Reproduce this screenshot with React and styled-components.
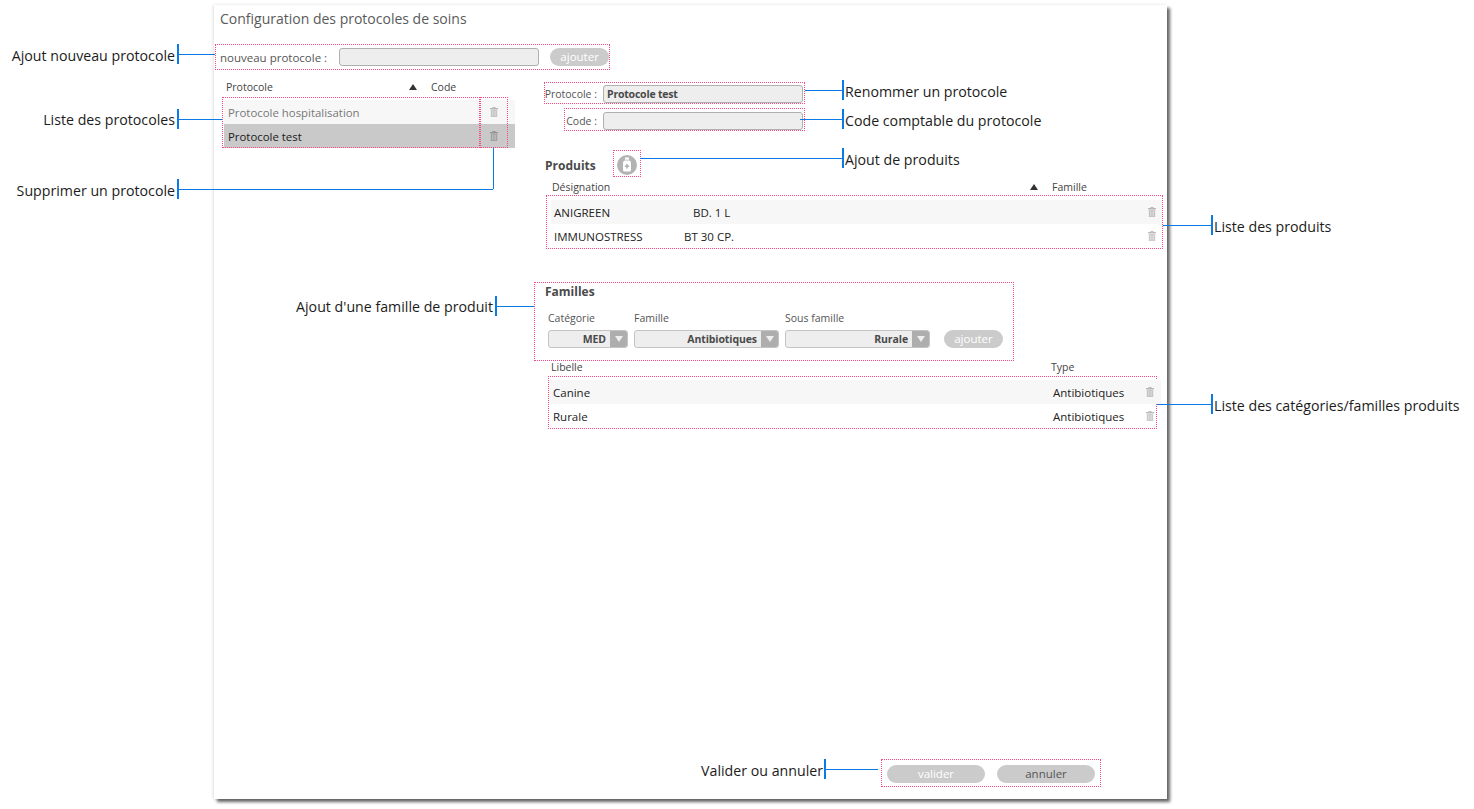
import styled, { createGlobalStyle } from "styled-components";

const GlobalStyle = createGlobalStyle`
  html, body {
    margin: 0;
    padding: 0;
    background: #fff;
    font-family: "Open Sans", "Noto Sans", sans-serif;
  }
`;

const BLUE = "#0a7ae6";
const PINK = "#f7487f";

const Page = styled.div`
  position: relative;
  width: 1474px;
  height: 809px;
  overflow: hidden;
  background: #fff;
`;

const Panel = styled.main`
  display: flex;
  flex-direction: column;
  box-sizing: border-box;
  width: 953px;
  height: 794px;
  margin: 5px 0 0 214px;
  background: #fff;
  box-shadow: 3px 3px 3px rgba(0, 0, 0, 0.6), -1px 0 3px rgba(0, 0, 0, 0.12);
`;

const Title = styled.h1`
  height: 39px;
  margin: 0;
  padding: 4px 0 0 6px;
  box-sizing: border-box;
  font-size: 14px;
  font-weight: 400;
  line-height: 19px;
  color: #5a5a5a;
`;

const Marked = styled.div`
  box-sizing: border-box;
  border: 1px dotted ${PINK};
`;

const NewRow = styled(Marked)`
  display: flex;
  align-items: center;
  width: 395px;
  height: 26px;
  margin-left: 1px;
  padding-left: 4px;
`;

const FieldLabel = styled.label`
  font-size: ${(p) => p.$size || 10.5}px;
  color: #555;
  white-space: nowrap;
`;

const TextBox = styled.div`
  box-sizing: border-box;
  flex: none;
  width: 200px;
  height: 18px;
  padding-left: 3px;
  border: 1px solid #b0b0b0;
  border-radius: 3px;
  background: #eee;
  font-size: 10.5px;
  font-weight: 700;
  letter-spacing: -0.2px;
  line-height: 16px;
  color: #4a4a4a;
`;

const NewName = styled(TextBox)`
  margin-left: 12px;
`;

const Pill = styled.button`
  box-sizing: border-box;
  flex: none;
  width: ${(p) => p.$width}px;
  height: 18px;
  padding: 0;
  border: 0;
  border-radius: 9px;
  background: #cbcbcb;
  font: 400 11.5px/18px "Open Sans", sans-serif;
  color: ${(p) => (p.$dark ? "#555" : "#fff")};
`;

const NewAdd = styled(Pill)`
  margin-left: 11px;
`;

const Columns = styled.div`
  display: flex;
  margin-top: 10px;
`;

const LeftColumn = styled.section`
  position: relative;
  width: 293px;
  margin-left: 8px;
`;

const RightColumn = styled.section`
  width: 633px;
  margin-left: 19px;
  padding-top: 2px;
`;

const HeadRow = styled.div`
  display: flex;
  align-items: center;
  height: ${(p) => p.$height}px;
  padding-left: ${(p) => p.$inset}px;
  font-size: 10.5px;
  color: #444;
`;

const HeadCell = styled.span`
  width: ${(p) => p.$width}px;
  flex: none;
`;

const SortMark = styled.span`
  flex: none;
  width: 0;
  height: 0;
  margin-right: 14px;
  border-left: 4px solid transparent;
  border-right: 4px solid transparent;
  border-bottom: 6px solid #333;
`;

const ProtocolRows = styled.div`
  padding: 6px 0 0 2px;
`;

const ProtocolRow = styled.div`
  display: flex;
  align-items: center;
  justify-content: space-between;
  height: 24px;
  padding: 0 17px 0 4px;
  background: ${(p) => (p.$selected ? "#c9c9c9" : "#f7f7f7")};
  font-size: 11.4px;
  color: ${(p) => (p.$selected ? "#1a1a1a" : "#777")};
`;

/* dotted frames that sit over the protocol rows */
const RowsFrame = styled(Marked)`
  position: absolute;
  top: 17px;
  left: ${(p) => p.$left}px;
  width: ${(p) => p.$width}px;
  height: 51px;
`;

const FieldRow = styled(Marked)`
  display: flex;
  align-items: center;
  justify-content: flex-end;
  gap: 6px;
  width: ${(p) => p.$width}px;
  height: ${(p) => p.$height}px;
  margin: ${(p) => p.$top}px 0 0 ${(p) => p.$left}px;
  padding: ${(p) => p.$drop}px 1px 0 0;
`;

const SectionHead = styled.div`
  display: flex;
  align-items: center;
  margin: 19px 0 0 11px;
`;

const SectionTitle = styled.h2`
  margin: 0;
  font-size: 12px;
  font-weight: 700;
  color: #4a4a4a;
`;

const ProductsTitle = styled(SectionTitle)`
  padding-top: 3px;
`;

const IconFrame = styled(Marked)`
  display: flex;
  align-items: center;
  justify-content: center;
  width: 28px;
  height: 27px;
  margin-left: 17px;
  padding-top: 2px;
`;

const ProductHead = styled(HeadRow)`
  margin-top: 2px;
`;

const ListFrame = styled(Marked)`
  width: ${(p) => p.$width}px;
  margin-left: ${(p) => p.$left}px;
  padding: ${(p) => p.$top}px 0 0 ${(p) => p.$inset}px;
`;

const ListRow = styled.div`
  display: flex;
  align-items: center;
  height: 24px;
  margin-right: ${(p) => p.$over || 0}px;
  padding: 0 ${(p) => p.$pad}px 0 ${(p) => p.$lead}px;
  background: ${(p) => (p.$striped ? "#f7f7f7" : "transparent")};
  font-size: 11.5px;
  color: #222;
`;

const Cell = styled.span`
  width: ${(p) => p.$width}px;
  flex: ${(p) => (p.$grow ? 1 : "none")};
  white-space: nowrap;
`;

const FamilyBox = styled(Marked)`
  width: 480px;
  height: 79px;
  margin-top: 33px;
  padding: 0 0 0 10px;
`;

const FamilyFields = styled.div`
  display: flex;
  align-items: flex-end;
  gap: 6px;
  margin: 11px 0 0 3px;
`;

const FamilyField = styled.div`
  width: ${(p) => p.$width}px;
  font-size: 10.5px;
  color: #555;
`;

const SelectBox = styled.div`
  box-sizing: border-box;
  display: flex;
  align-items: center;
  justify-content: flex-end;
  height: 18px;
  margin-top: 5px;
  border: 1px solid #c4c4c4;
  border-radius: 3px;
  background: #eee;
  overflow: hidden;
  font-size: 10.5px;
  font-weight: 700;
  letter-spacing: -0.1px;
  color: #4a4a4a;
`;

const SelectArrow = styled.span`
  display: flex;
  align-items: center;
  justify-content: center;
  flex: none;
  width: 17px;
  height: 100%;
  margin-left: 4px;
  background: #aeaeae;

  &::after {
    content: "";
    border-left: 4px solid transparent;
    border-right: 4px solid transparent;
    border-top: 6px solid #eee;
  }
`;

const FamilyAdd = styled(Pill)`
  margin-left: 8px;
`;

const LabelHead = styled(HeadRow)`
  margin-bottom: 3px;
`;

const Footer = styled.footer`
  display: flex;
  justify-content: flex-end;
  margin-top: auto;
  padding: 0 66px 12px 0;
`;

const FooterBox = styled(Marked)`
  display: flex;
  gap: 12px;
  width: 220px;
  height: 28px;
  padding: 5px 0 0 5px;
`;

/* annotation layer: labels and blue leader lines drawn over the window */
const Tick = styled.i`
  position: absolute;
  left: ${(p) => p.$x}px;
  top: ${(p) => p.$y}px;
  width: 2px;
  height: 20px;
  background: ${BLUE};
`;

const Lead = styled.i`
  position: absolute;
  left: ${(p) => p.$x}px;
  top: ${(p) => p.$y}px;
  width: ${(p) => p.$w}px;
  height: ${(p) => p.$h}px;
  background: ${BLUE};
`;

const Note = styled.span`
  position: absolute;
  top: ${(p) => p.$y}px;
  ${(p) => (p.$end ? `right: ${1474 - p.$end}px;` : `left: ${p.$x}px;`)}
  font-size: 14.2px;
  line-height: 20px;
  color: #1c1c1c;
  white-space: nowrap;
`;

const Bin = () => (
  <svg width="8" height="10" viewBox="0 0 8 10">
    <path d="M2.500 0h3v1H8v1.200H0V1h2.500z" fill="rgba(0,0,0,0.26)" />
    <path d="M.8 2.600h6.400V10H.8z" fill="rgba(0,0,0,0.2)" />
    <path d="M2.300 3.500h1v5.600h-1zM4.700 3.500h1v5.600h-1z" fill="rgba(255,255,255,0.4)" />
  </svg>
);

const BottleButton = () => (
  <svg width="20" height="20" viewBox="0 0 20 20">
    <circle cx="10" cy="10" r="10" fill="#b3b3b3" />
    <path d="M8 2.500h4v2.200H8z" fill="#fff" />
    <path d="M7.600 5.500h4.800c1 .6 1.600 1.500 1.600 2.600V15a1.600 1.600 0 0 1-1.600 1.600H7.600A1.600 1.600 0 0 1 6 15V8.100c0-1.100.6-2 1.600-2.600z" fill="#fff" />
    <path d="M9.200 9h1.600v1.400h1.400V12h-1.400v1.400H9.200V12H7.800v-1.600h1.400z" fill="#b3b3b3" />
  </svg>
);

const callouts = [
  { label: "Ajout nouveau protocole", end: 175, y: 46, tick: [177, 44], lead: [177, 54, 38, 1] },
  { label: "Liste des protocoles", end: 175, y: 110, tick: [177, 109], lead: [177, 119, 45, 1] },
  { label: "Supprimer un protocole", end: 175, y: 181, tick: [177, 179], lead: [177, 189, 316, 1], rise: [493, 148, 1, 41] },
  { label: "Renommer un protocole", x: 845, y: 82, tick: [842, 80], lead: [805, 90, 37, 1] },
  { label: "Code comptable du protocole", x: 845, y: 111, tick: [842, 109], lead: [800, 119, 42, 1] },
  { label: "Ajout de produits", x: 845, y: 150, tick: [842, 148], lead: [640, 158, 202, 1] },
  { label: "Liste des produits", x: 1214, y: 217, tick: [1211, 215], lead: [1163, 225, 48, 1] },
  { label: "Ajout d'une famille de produit", end: 493, y: 297, tick: [495, 296], lead: [495, 306, 39, 1] },
  { label: "Liste des catégories/familles produits", x: 1214, y: 396, tick: [1211, 394], lead: [1157, 404, 54, 1] },
  { label: "Valider ou annuler", end: 823, y: 761, tick: [824, 759], lead: [824, 769, 54, 1] },
];

const products = [
  { name: "ANIGREEN", pack: "BD. 1 L", width: 139 },
  { name: "IMMUNOSTRESS", pack: "BT 30 CP.", width: 130 },
];

const familyRows = ["Canine", "Rurale"];

export default function App() {
  return (
    <Page>
      <GlobalStyle />
      <Panel>
        <Title>Configuration des protocoles de soins</Title>

        <NewRow>
          <FieldLabel $size={11.5}>nouveau protocole :</FieldLabel>
          <NewName />
          <NewAdd $width={59}>ajouter</NewAdd>
        </NewRow>

        <Columns>
          <LeftColumn>
            <HeadRow $inset={4} $height={14}>
              <HeadCell $width={183}>Protocole</HeadCell>
              <SortMark />
              <HeadCell $width={40}>Code</HeadCell>
            </HeadRow>
            <ProtocolRows>
              <ProtocolRow>
                Protocole hospitalisation
                <Bin />
              </ProtocolRow>
              <ProtocolRow $selected>
                Protocole test
                <Bin />
              </ProtocolRow>
            </ProtocolRows>
            <RowsFrame $left={0} $width={258} />
            <RowsFrame $left={258} $width={28} />
          </LeftColumn>

          <RightColumn>
            <FieldRow $width={261} $height={22} $drop={1} $top={0} $left={10}>
              <FieldLabel>Protocole :</FieldLabel>
              <TextBox>Protocole test</TextBox>
            </FieldRow>
            <FieldRow $width={241} $height={23} $drop={3} $top={4} $left={30}>
              <FieldLabel>Code :</FieldLabel>
              <TextBox />
            </FieldRow>

            <SectionHead>
              <ProductsTitle>Produits</ProductsTitle>
              <IconFrame>
                <BottleButton />
              </IconFrame>
            </SectionHead>

            <ProductHead $inset={18} $height={16}>
              <HeadCell $width={478}>Désignation</HeadCell>
              <SortMark />
              <HeadCell $width={60}>Famille</HeadCell>
            </ProductHead>
            <ListFrame $width={617} $left={12} $inset={4} $top={4}>
              {products.map((item, i) => (
                <ListRow key={item.name} $striped={i === 0} $pad={6} $lead={3}>
                  <Cell $width={item.width}>{item.name}</Cell>
                  <Cell $grow>{item.pack}</Cell>
                  <Bin />
                </ListRow>
              ))}
            </ListFrame>

            <FamilyBox>
              <SectionTitle>Familles</SectionTitle>
              <FamilyFields>
                <FamilyField $width={80}>
                  Catégorie
                  <SelectBox>MED<SelectArrow /></SelectBox>
                </FamilyField>
                <FamilyField $width={145}>
                  Famille
                  <SelectBox>Antibiotiques<SelectArrow /></SelectBox>
                </FamilyField>
                <FamilyField $width={145}>
                  Sous famille
                  <SelectBox>Rurale<SelectArrow /></SelectBox>
                </FamilyField>
                <FamilyAdd $width={59}>ajouter</FamilyAdd>
              </FamilyFields>
            </FamilyBox>

            <LabelHead $inset={17} $height={12}>
              <HeadCell $width={500}>Libelle</HeadCell>
              <HeadCell $width={40}>Type</HeadCell>
            </LabelHead>
            <ListFrame $width={609} $left={14} $inset={0} $top={3}>
              {familyRows.map((name, i) => (
                <ListRow key={name} $striped={i === 0} $pad={7} $lead={4} $over={-5}>
                  <Cell $width={500}>{name}</Cell>
                  <Cell $grow>Antibiotiques</Cell>
                  <Bin />
                </ListRow>
              ))}
            </ListFrame>
          </RightColumn>
        </Columns>

        <Footer>
          <FooterBox>
            <Pill $width={98}>valider</Pill>
            <Pill $width={98} $dark>annuler</Pill>
          </FooterBox>
        </Footer>
      </Panel>

      {callouts.map((c) => (
        <div key={c.label}>
          <Note $x={c.x} $end={c.end} $y={c.y}>{c.label}</Note>
          <Tick $x={c.tick[0]} $y={c.tick[1]} />
          <Lead $x={c.lead[0]} $y={c.lead[1]} $w={c.lead[2]} $h={c.lead[3]} />
          {c.rise && <Lead $x={c.rise[0]} $y={c.rise[1]} $w={c.rise[2]} $h={c.rise[3]} />}
        </div>
      ))}
    </Page>
  );
}
